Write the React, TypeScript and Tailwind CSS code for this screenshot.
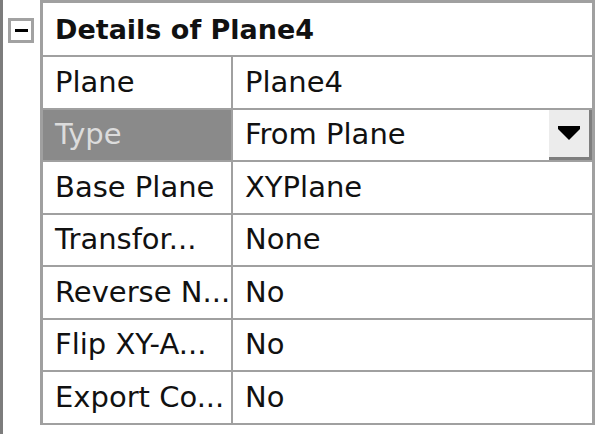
import React from "react";

const rows: { label: string; value: string; selected?: boolean; dropdown?: boolean }[] = [
  { label: "Plane", value: "Plane4" },
  { label: "Type", value: "From Plane", selected: true, dropdown: true },
  { label: "Base Plane", value: "XYPlane" },
  { label: "Transfor...", value: "None" },
  { label: "Reverse N...", value: "No" },
  { label: "Flip XY-A...", value: "No" },
  { label: "Export Co...", value: "No" },
];

export default function App() {
  return (
    <div
      className="flex w-[598px] h-[434px] bg-white overflow-hidden"
      style={{ fontFamily: '"DejaVu Sans", sans-serif' }}
    >
      {/* left tree bar */}
      <div className="w-[3px] h-full bg-[#7c7c7c]" />
      <div className="w-[37px] pt-[18px] pl-[5px]">
        <div className="w-[26px] h-[25px] border-[3px] border-[#a2a2a2] flex items-center justify-center">
          <div className="w-[13px] h-[3px] bg-black" />
        </div>
      </div>

      {/* details table */}
      <div className="w-[555px] h-[425px] border-[3px] border-t-[3px] border-b-[2px] border-[#a0a0a0] flex flex-col">
        <div className="h-[52px] flex items-center pl-[12px] text-[27px] font-bold text-[#111] leading-none">
          Details of Plane4
        </div>
        {rows.map((r) => (
          <div key={r.label} className="h-[52.5px] flex border-t-2 border-[#a0a0a0] text-[29px] leading-none">
            <div
              className={`w-[190px] border-r-2 border-[#a0a0a0] flex items-center pl-[12px] whitespace-nowrap overflow-hidden ${
                r.selected ? "bg-[#8a8a8a] text-[#dcdcdc]" : "text-[#111]"
              }`}
            >
              {r.label}
            </div>
            <div className="flex-1 flex items-center pl-[12px] text-[#111] whitespace-nowrap">
              <span className="flex-1">{r.value}</span>
              {r.dropdown && (
                <div className="w-[43px] h-full bg-[#ececec] border-r-[3px] border-b-[3px] border-[#7e7e7e] flex items-center justify-center">
                  <svg width="22" height="14" viewBox="0 0 22 14">
                    <polygon points="0,0 22,0 22,3 11,14 0,3" fill="#000" />
                  </svg>
                </div>
              )}
            </div>
          </div>
        ))}
      </div>
    </div>
  );
}
